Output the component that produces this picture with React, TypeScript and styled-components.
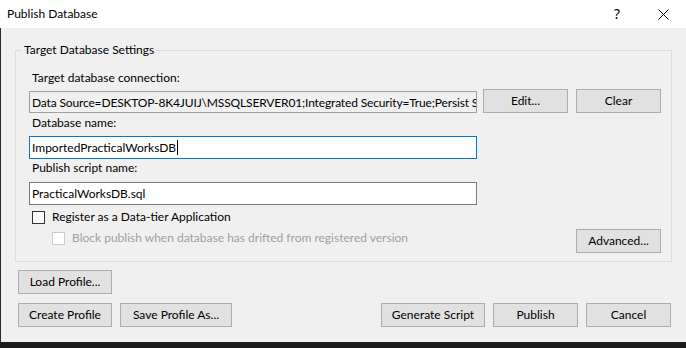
import styled, { createGlobalStyle } from "styled-components"

const GlobalStyle = createGlobalStyle`
  html, body {
    margin: 0;
    padding: 0;
    background: #1c1c1c;
  }

  body {
    font-family: Lato, "Noto Sans", sans-serif;
    font-size: 12px;
    color: #000;
  }
`

export default function App() {
  return (
    <>
      <GlobalStyle />
      <Dialog>
        <TitleBar>
          <Title>Publish Database</Title>
          <CaptionButton>
            <HelpGlyph>?</HelpGlyph>
          </CaptionButton>
          <CaptionButton>
            <svg width="11" height="11" viewBox="0 0 11 11">
              <path d="M0.5 0.5 L10.5 10.5 M10.5 0.5 L0.5 10.5" stroke="#000" strokeWidth="1" />
            </svg>
          </CaptionButton>
        </TitleBar>

        <DialogBody>
          <GroupBox>
            <Legend>Target Database Settings</Legend>

            <FieldStack>
              <FieldLabel $top={12}>Target database connection:</FieldLabel>
              <ConnectionRow>
                <TextBox $variant="readonly">
                  Data Source=DESKTOP-8K4JUIJ\MSSQLSERVER01;Integrated Security=True;Persist Security Info=False
                </TextBox>
                <Button $width={85}>Edit...</Button>
                <Button $width={85}>Clear</Button>
              </ConnectionRow>

              <FieldLabel $top={2}>Database name:</FieldLabel>
              <TextBox $variant="focused" $top={5}>
                ImportedPracticalWorksDB
                <Caret />
              </TextBox>

              <FieldLabel $top={1}>Publish script name:</FieldLabel>
              <TextBox $top={6}>PracticalWorksDB.sql</TextBox>

              <CheckRow $top={4} $indent={3}>
                <CheckBox />
                <span>Register as a Data-tier Application</span>
              </CheckRow>

              <OptionsRow>
                <CheckRow $top={1} $indent={23} $disabled>
                  <CheckBox $disabled />
                  <span>Block publish when database has drifted from registered version</span>
                </CheckRow>
                <Button $width={85}>Advanced...</Button>
              </OptionsRow>
            </FieldStack>
          </GroupBox>

          <ButtonRow $top={8}>
            <Button $width={94}>Load Profile...</Button>
          </ButtonRow>

          <ButtonRow $top={9}>
            <Button $width={94}>Create Profile</Button>
            <Button $width={112}>Save Profile As...</Button>
            <Spacer />
            <Button $width={104}>Generate Script</Button>
            <Button $width={85}>Publish</Button>
            <Button $width={85}>Cancel</Button>
          </ButtonRow>
        </DialogBody>
      </Dialog>
    </>
  )
}

const Dialog = styled.div`
  width: 686px;
  height: 342px;
  display: flex;
  flex-direction: column;
`

const TitleBar = styled.div`
  height: 28px;
  flex-shrink: 0;
  display: flex;
  align-items: center;
  background: #ffffff;
  padding-left: 7px;
`

const Title = styled.div`
  flex: 1;
  line-height: 16px;
`

const CaptionButton = styled.div`
  width: 46px;
  height: 28px;
  display: flex;
  align-items: center;
  justify-content: center;
`

const HelpGlyph = styled.span`
  font-family: "Noto Sans", sans-serif;
  font-size: 14px;
  line-height: 16px;
`

const DialogBody = styled.div`
  flex: 1;
  display: flex;
  flex-direction: column;
  background: #f0f0f0;
  border-left: 1px solid #2b2b2b;
  padding: 14px 14px 0 14px;
`

const GroupBox = styled.fieldset`
  margin: 0;
  padding: 0;
  border: 1px solid #dcdcdc;
  min-width: 0;
`

const Legend = styled.legend`
  margin-left: 6px;
  padding: 0 2px;
  line-height: 16px;
`

const FieldStack = styled.div`
  display: flex;
  flex-direction: column;
  padding: 0 10px 8px 13px;
`

const FieldLabel = styled.div<{ $top: number }>`
  margin-top: ${(p) => p.$top}px;
  margin-left: 3px;
  line-height: 16px;
`

const ConnectionRow = styled.div`
  margin-top: 3px;
  display: flex;
  align-items: flex-end;
  gap: 8px;

  & > :first-child {
    margin-right: -2px;
  }
`

const TextBox = styled.div<{ $variant?: "readonly" | "focused"; $top?: number }>`
  box-sizing: border-box;
  width: 448px;
  height: ${(p) => (p.$variant === "readonly" ? 22 : 23)}px;
  margin-top: ${(p) => p.$top ?? 0}px;
  padding: 0 2px;
  display: flex;
  align-items: center;
  flex-shrink: 0;
  white-space: nowrap;
  overflow: hidden;
  letter-spacing: ${(p) => (p.$variant === "readonly" ? "-0.15px" : "normal")};
  background: ${(p) => (p.$variant === "readonly" ? "#f0f0f0" : "#ffffff")};
  border: 1px solid
    ${(p) => (p.$variant === "focused" ? "#0078d7" : p.$variant === "readonly" ? "#a0a0a0" : "#7a7a7a")};
`

const Caret = styled.span`
  display: inline-block;
  width: 1px;
  height: 15px;
  background: #000;
  margin-left: 1px;
`

const CheckRow = styled.div<{ $top: number; $indent: number; $disabled?: boolean }>`
  margin-top: ${(p) => p.$top}px;
  margin-left: ${(p) => p.$indent}px;
  display: flex;
  align-items: center;
  gap: 7px;
  line-height: 16px;
  color: ${(p) => (p.$disabled ? "#a0a0a0" : "#000")};
`

const CheckBox = styled.span<{ $disabled?: boolean }>`
  box-sizing: border-box;
  width: 13px;
  height: 13px;
  flex-shrink: 0;
  background: #ffffff;
  border: 1px solid ${(p) => (p.$disabled ? "#cccccc" : "#333333")};
`

const OptionsRow = styled.div`
  margin-top: 4px;
  display: flex;
  align-items: flex-start;
  justify-content: space-between;
`

const ButtonRow = styled.div<{ $top: number }>`
  margin: ${(p) => p.$top}px 1px 0 3px;
  display: flex;
  gap: 8px;
`

const Spacer = styled.div`
  flex: 1;
`

const Button = styled.div<{ $width: number }>`
  box-sizing: border-box;
  width: ${(p) => p.$width}px;
  height: 24px;
  flex-shrink: 0;
  display: flex;
  align-items: center;
  justify-content: center;
  background: #e1e1e1;
  border: 1px solid #adadad;
  line-height: 16px;
`
